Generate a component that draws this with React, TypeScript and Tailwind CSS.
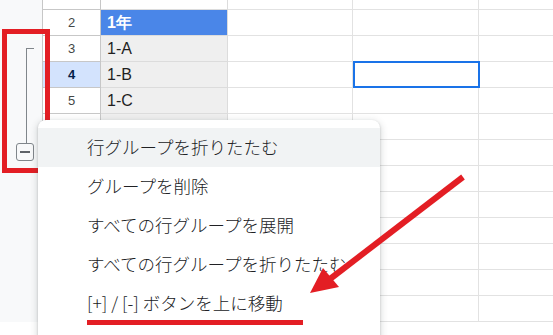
import React from "react";

const rowsNums = [2, 3, 4, 5, 6, 7, 8, 9, 10, 11, 12, 13];

function Row({ n }: { n: number }) {
  const header =
    n === 4
      ? "bg-[#d3e3fd] font-bold text-[#041e49]"
      : "bg-white text-[#444746]";
  let bCell = "bg-white";
  let bText: React.ReactNode = null;
  if (n === 2) {
    bCell = "bg-[#4a86e8]";
    bText = <span className="font-bold text-white">1年</span>;
  } else if (n >= 3) {
    bCell = "bg-[#efefef]";
    if (n === 3) bText = <span className="text-[#1f1f1f]">1-A</span>;
    if (n === 4) bText = <span className="text-[#1f1f1f]">1-B</span>;
    if (n === 5) bText = <span className="text-[#1f1f1f]">1-C</span>;
  }
  return (
    <div className="flex h-[26px] shrink-0">
      <div className="w-[43px] shrink-0 bg-[#f8f9fa] border-r border-[#c7c7c7]" />
      <div
        className={`w-[58px] shrink-0 flex items-center justify-center text-[13px] border-r border-b border-[#c7c7c7] ${header}`}
      >
        {n}
      </div>
      <div
        className={`w-[127px] shrink-0 flex items-center pl-[6px] text-[16px] border-r border-b border-[#dcdcdc] ${bCell}`}
      >
        {bText}
      </div>
      <div className="w-[125px] shrink-0 border-r border-b border-[#e2e2e2] bg-white" />
      <div className="w-[126px] shrink-0 border-r border-b border-[#e2e2e2] bg-white" />
      <div className="flex-1 border-b border-[#e2e2e2] bg-white" />
    </div>
  );
}

export default function App() {
  return (
    <div
      className="relative w-[553px] h-[335px] overflow-hidden bg-white"
      style={{ fontFamily: '"Liberation Sans", Arial, sans-serif' }}
    >
      {/* grid */}
      <div className="flex flex-col">
        <div className="flex h-[10px] shrink-0">
          <div className="w-[43px] shrink-0 bg-[#f8f9fa] border-r border-[#c7c7c7]" />
          <div className="w-[58px] shrink-0 bg-white border-r border-b border-[#c7c7c7]" />
          <div className="w-[127px] shrink-0 bg-white border-r border-b border-[#dcdcdc]" />
          <div className="w-[125px] shrink-0 border-r border-b border-[#e2e2e2]" />
          <div className="w-[126px] shrink-0 border-r border-b border-[#e2e2e2]" />
          <div className="flex-1 border-b border-[#e2e2e2]" />
        </div>
        {rowsNums.map((n) => (
          <Row key={n} n={n} />
        ))}
      </div>

      {/* selected cell */}
      <div className="absolute left-[353px] top-[61px] w-[127px] h-[27px] border-2 border-[#1a73e8]" />

      {/* group bracket */}
      <div className="absolute left-[26px] top-[48px] w-[8px] h-[95px] border-l border-t border-[#80868b]" />
      <div className="absolute left-[16px] top-[143px] w-[18px] h-[18px] rounded-[3px] border border-[#80868b] bg-[#f8f9fa] flex items-center justify-center">
        <div className="w-[10px] h-[1.5px] bg-[#5f6368]" />
      </div>

      {/* red box annotation */}
      <div className="absolute left-[2px] top-[29px] w-[48px] h-[144px] border-[5px] border-[#e31e24]" />

      {/* context menu */}
      <div
        className="absolute left-[38px] top-[120px] w-[342px] h-[240px] bg-white rounded-[8px] pt-[8px] shadow-[0_2px_6px_2px_rgba(60,64,67,0.15),0_1px_2px_rgba(60,64,67,0.3)]"
        style={{ fontFamily: '"Noto Sans CJK JP", "Noto Sans", sans-serif' }}
      >
        {[
          "行グループを折りたたむ",
          "グループを削除",
          "すべての行グループを展開",
          "すべての行グループを折りたたむ",
          "[+] / [-] ボタンを上に移動",
        ].map((t, i) => (
          <div
            key={t}
            className={`h-[39px] flex items-center pl-[49px] text-[17.5px] font-light text-[#202124] ${
              i === 0 ? "bg-[#f1f3f4]" : ""
            }`}
          >
            {t}
          </div>
        ))}
      </div>

      {/* red underline */}
      <div className="absolute left-[87px] top-[320px] w-[216px] h-[5px] bg-[#e31e24]" />

      {/* arrow */}
      <svg
        className="absolute left-0 top-0 pointer-events-none"
        width="553"
        height="335"
        viewBox="0 0 553 335"
      >
        <line
          x1="463"
          y1="177"
          x2="330"
          y2="279"
          stroke="#e31e24"
          strokeWidth="6"
        />
        <polygon points="310,293 323,268 339,287" fill="#e31e24" />
      </svg>
    </div>
  );
}
